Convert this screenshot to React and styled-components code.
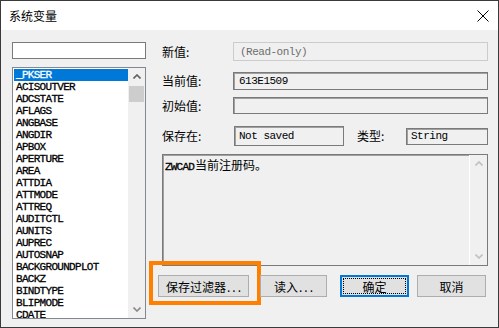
import React from "react";
import styled, { createGlobalStyle } from "styled-components";

const GlobalStyle = createGlobalStyle`
  html, body { margin: 0; padding: 0; background: #f0f0f0; }
  body { font-family: "Noto Sans CJK SC", "Liberation Sans", sans-serif; }
`;

const Window = styled.div`
  width: 499px;
  height: 328px;
  box-sizing: border-box;
  border: 1px solid #3a3a3a;
  display: flex;
  flex-direction: column;
  background: #f0f0f0;
  overflow: hidden;
`;

const TitleBar = styled.div`
  height: 29px;
  flex: none;
  background: #fff;
  display: flex;
  align-items: center;
  justify-content: space-between;
  padding: 0 9px 0 8px;
  font-size: 12px;
  color: #000;
`;

const Body = styled.div`
  flex: 1;
  display: flex;
  gap: 16px;
  padding: 12px 10px 0 11px;
`;

const LeftCol = styled.div`
  width: 134px;
  display: flex;
  flex-direction: column;
  gap: 8px;
`;

const SearchBox = styled.div`
  height: 17px;
  box-sizing: border-box;
  border: 1px solid #7a7a7a;
  background: #fff;
`;

const ListBox = styled.div`
  height: 252px;
  box-sizing: border-box;
  border: 1px solid #828790;
  background: #fff;
  display: flex;
`;

const Items = styled.div`
  flex: 1;
  padding: 1px 0 0 1px;
  overflow: hidden;
`;

const Item = styled.div`
  height: 12px;
  line-height: 12px;
  padding-left: 2px;
  font-family: "Liberation Mono", monospace;
  font-size: 11px;
  letter-spacing: -0.7px;
  -webkit-text-stroke: 0.3px ${(p) => (p.$selected ? "#fff" : "#000")};
  white-space: nowrap;
  color: ${(p) => (p.$selected ? "#fff" : "#000")};
  background: ${(p) => (p.$selected ? "#0078d7" : "transparent")};
`;

const ScrollBar = styled.div`
  width: 17px;
  background: #f0f0f0;
  display: flex;
  flex-direction: column;
  border-left: ${(p) => (p.$line ? "1px solid #fff" : "none")};
`;

const ArrowBox = styled.div`
  height: 17px;
  display: flex;
  align-items: center;
  justify-content: center;
`;

const Thumb = styled.div`
  height: 16px;
  margin: 1px 1px 0 1px;
  background: #cdcdcd;
`;

const Track = styled.div`
  flex: 1;
`;

const RightCol = styled.div`
  width: 326px;
  display: flex;
  flex-direction: column;
`;

const Row = styled.div`
  display: flex;
  align-items: center;
  margin-top: ${(p) => p.$mt || 0}px;
`;

const Label = styled.div`
  width: ${(p) => p.$w || 71}px;
  flex: none;
  margin-left: ${(p) => p.$ml || 0}px;
  font-size: 12px;
  line-height: 14px;
  color: #000;
  white-space: nowrap;
`;

const Field = styled.div`
  width: ${(p) => p.$w || 255}px;
  height: ${(p) => p.$h}px;
  box-sizing: border-box;
  border: 1px solid ${(p) => (p.$disabled ? "#cccccc" : "#7a7a7a")};
  box-shadow: ${(p) => (p.$disabled ? "none" : "inset 1px 1px 0 #a0a0a0")};
  background: #f0f0f0;
  display: flex;
  align-items: center;
  padding-left: ${(p) => p.$pl || 5}px;
  font-family: "Liberation Mono", monospace;
  font-size: 11px;
  letter-spacing: -0.5px;
  color: ${(p) => (p.$disabled ? "#6d6d6d" : "#000")};
  white-space: nowrap;
`;

const DescBox = styled.div`
  margin-top: 8px;
  height: 112px;
  box-sizing: border-box;
  border: 1px solid #7a7a7a;
  box-shadow: inset 1px 1px 0 #a0a0a0;
  background: #f0f0f0;
  display: flex;
`;

const DescText = styled.div`
  flex: 1;
  padding: 2px 0 0 2px;
  font-size: 12px;
  line-height: 16px;
  color: #000;
`;

const Latin = styled.span`
  font-family: "Liberation Mono", monospace;
  font-size: 11px;
  letter-spacing: -0.8px;
  -webkit-text-stroke: 0.3px #000;
  margin-right: 1px;
`;

const ButtonRow = styled.div`
  margin-top: 9px;
  margin-left: -4px;
  display: flex;
  align-items: center;
`;

const Button = styled.div`
  position: relative;
  width: ${(p) => p.$w}px;
  height: 22px;
  box-sizing: border-box;
  margin-left: ${(p) => p.$ml || 0}px;
  border: ${(p) => (p.$focus ? "2px solid #0078d7" : "1px solid #adadad")};
  background: #e1e1e1;
  display: flex;
  align-items: center;
  justify-content: center;
  font-size: 12px;
  color: #000;
  white-space: nowrap;
`;

const Dots = styled.span`
  letter-spacing: 2px;
  margin-left: 1px;
  margin-right: -2px;
`;

const FocusRing = styled.div`
  position: absolute;
  inset: 1px;
  border: 1px dotted #000;
`;

const Highlight = styled.div`
  position: absolute;
  left: -10px;
  top: -15px;
  width: 112px;
  height: 44px;
  box-sizing: border-box;
  border: 4px solid #ff8000;
  pointer-events: none;
`;

const Chevron = ({ down, color = "#606060" }) => (
  <svg width="8" height="5" viewBox="0 0 8 5">
    <path
      d={down ? "M0.5 0.5 L4 4 L7.5 0.5" : "M0.5 4.5 L4 1 L7.5 4.5"}
      fill="none"
      stroke={color}
      strokeWidth="1.6"
    />
  </svg>
);

const CloseIcon = () => (
  <svg width="12" height="12" viewBox="0 0 12 12">
    <path d="M0.5 0.5 L11.5 11.5 M11.5 0.5 L0.5 11.5" stroke="#000" strokeWidth="1" />
  </svg>
);

const vars = [
  "_PKSER", "ACISOUTVER", "ADCSTATE", "AFLAGS", "ANGBASE", "ANGDIR", "APBOX",
  "APERTURE", "AREA", "ATTDIA", "ATTMODE", "ATTREQ", "AUDITCTL", "AUNITS",
  "AUPREC", "AUTOSNAP", "BACKGROUNDPLOT", "BACKZ", "BINDTYPE", "BLIPMODE", "CDATE",
];

export default function App() {
  return (
    <>
      <GlobalStyle />
      <Window>
        <TitleBar>
          <span>系统变量</span>
          <CloseIcon />
        </TitleBar>
        <Body>
          <LeftCol>
            <SearchBox />
            <ListBox>
              <Items>
                {vars.map((v, i) => (
                  <Item key={v} $selected={i === 0}>{v}</Item>
                ))}
              </Items>
              <ScrollBar>
                <ArrowBox><Chevron /></ArrowBox>
                <Thumb />
                <Track />
                <ArrowBox><Chevron down color="#8a8a8a" /></ArrowBox>
              </ScrollBar>
            </ListBox>
          </LeftCol>
          <RightCol>
            <Row>
              <Label>新值:</Label>
              <Field $h={19} $disabled $pl={6}>(Read-only)</Field>
            </Row>
            <Row $mt={11}>
              <Label>当前值:</Label>
              <Field $h={18}>613E1509</Field>
            </Row>
            <Row $mt={7}>
              <Label>初始值:</Label>
              <Field $h={17} />
            </Row>
            <Row $mt={12}>
              <Label $w={72}>保存在:</Label>
              <Field $h={20} $w={110} $pl={4}>Not saved</Field>
              <Label $w={49} $ml={13}>类型:</Label>
              <Field $h={17} $w={82} $pl={4}>String</Field>
            </Row>
            <DescBox>
              <DescText>
                <Latin>ZWCAD</Latin>当前注册码。
              </DescText>
              <ScrollBar $line>
                <ArrowBox><Chevron color="#c0c0c0" /></ArrowBox>
                <Track />
                <ArrowBox><Chevron down color="#c0c0c0" /></ArrowBox>
              </ScrollBar>
            </DescBox>
            <ButtonRow>
              <Button $w={91}>
                保存过滤器<Dots>...</Dots>
                <Highlight />
              </Button>
              <Button $w={67} $ml={11}>读入<Dots>...</Dots></Button>
              <Button $w={69} $ml={13} $focus>
                确定
                <FocusRing />
              </Button>
              <Button $w={69} $ml={8}>取消</Button>
            </ButtonRow>
          </RightCol>
        </Body>
      </Window>
    </>
  );
}
